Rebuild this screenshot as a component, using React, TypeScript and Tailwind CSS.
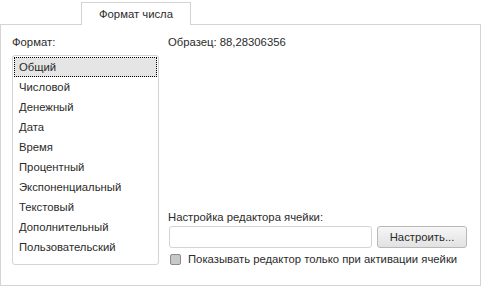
export default function App() {
  const items = [
    'Общий',
    'Числовой',
    'Денежный',
    'Дата',
    'Время',
    'Процентный',
    'Экспоненциальный',
    'Текстовый',
    'Дополнительный',
    'Пользовательский',
  ];

  return (
    <div
      className="w-[481px] h-[286px] bg-white text-[11.3px] text-[#2b2b2b] flex flex-col"
      style={{ fontFamily: '"Liberation Sans", Arial, sans-serif' }}
    >
      {/* Tabs */}
      <div className="h-[24px] pt-[1px] pl-[81px] flex">
        <div className="w-[110px] h-[23px] border border-b-0 border-[#d4d4d4] bg-white flex items-center justify-center relative top-[1px] z-10">
          Формат числа
        </div>
      </div>

      {/* Panel */}
      <div className="w-[481px] h-[263px] border border-[#d4d4d4] flex px-[11px] pt-[9px]">
        {/* Left column */}
        <div className="w-[147px] flex flex-col">
          <div className="h-[16px] leading-[16px] mb-[5px]">Формат:</div>
          <div className="h-[210px] border border-[#d4d4d4] rounded-[3px] p-[1px] flex flex-col">
            {items.map((item, i) => (
              <div
                key={item}
                className={
                  'h-[20px] leading-[18px] pl-[4px] ' +
                  (i === 0 ? 'bg-[#e5e5e5] border border-dotted border-black' : 'border border-transparent')
                }
              >
                {item}
              </div>
            ))}
          </div>
        </div>

        {/* Right column */}
        <div className="flex-1 ml-[9px] flex flex-col">
          <div className="h-[16px] leading-[16px]">Образец: 88,28306356</div>
          <div className="flex-1" />
          <div className="h-[16px] leading-[16px] mb-[1px]">Настройка редактора ячейки:</div>
          <div className="flex gap-[5px] pl-[1px]">
            <div className="w-[203px] h-[22px] border border-[#d4d4d4] rounded-[3px] bg-white" />
            <button className="w-[90px] h-[22px] border border-[#b8b8b8] rounded-[3px] bg-gradient-to-b from-[#f6f6f6] to-[#e2e2e2] text-[11.3px] text-[#2b2b2b]">
              Настроить...
            </button>
          </div>
          <div className="flex items-center gap-[7px] pl-[2px] mt-[4px] mb-[19px] whitespace-nowrap">
            <div className="w-[11px] h-[11px] rounded-[2px] border border-[#8a8a8a] bg-[#c8c8c8]" />
            <span className="leading-[14px]">Показывать редактор только при активации ячейки</span>
          </div>
        </div>
      </div>
    </div>
  );
}
